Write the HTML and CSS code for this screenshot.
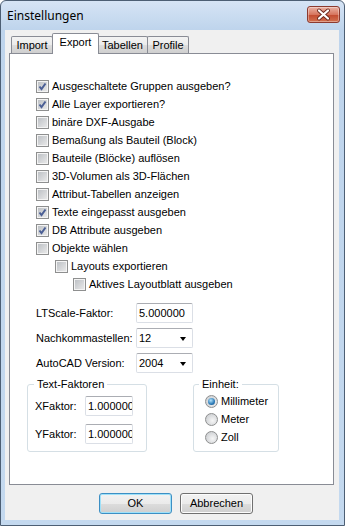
FILE: index.html
```html
<!DOCTYPE html>
<html>
  <head>
    <meta charset="UTF-8">
    <title>Einstellungen</title>
    <link rel="stylesheet" href="styles.css">
  </head>
  <body>
    <div class="window">
      <div class="titlebar">
        <span class="title">Einstellungen</span>
        <span class="close">
          <svg width="33" height="17" viewBox="0 0 33 17">
            <path d="M12 4.5 L21 12.5 M21 4.5 L12 12.5" stroke="#6b2a20" stroke-width="4" stroke-linecap="round"/>
            <path d="M12 4.5 L21 12.5 M21 4.5 L12 12.5" stroke="#fff" stroke-width="2.2" stroke-linecap="round"/>
          </svg>
        </span>
      </div>
      <div class="client">
        <div class="tabs">
          <span class="tab t-import">Import</span>
          <span class="tab t-export active">Export</span>
          <span class="tab t-tabellen">Tabellen</span>
          <span class="tab t-profile">Profile</span>
        </div>
        <div class="panel">
          <div class="checks">
            <div class="check"><span class="cb on"><svg width="13" height="13" viewBox="0 0 13 13"><path d="M3.5 6.5 L5.5 9 L9.5 3.5" fill="none" stroke="#4b5f95" stroke-width="2"/></svg></span>Ausgeschaltete Gruppen ausgeben?</div>
            <div class="check"><span class="cb on"><svg width="13" height="13" viewBox="0 0 13 13"><path d="M3.5 6.5 L5.5 9 L9.5 3.5" fill="none" stroke="#4b5f95" stroke-width="2"/></svg></span>Alle Layer exportieren?</div>
            <div class="check"><span class="cb"></span>binäre DXF-Ausgabe</div>
            <div class="check"><span class="cb"></span>Bemaßung als Bauteil (Block)</div>
            <div class="check"><span class="cb"></span>Bauteile (Blöcke) auflösen</div>
            <div class="check"><span class="cb"></span>3D-Volumen als 3D-Flächen</div>
            <div class="check"><span class="cb"></span>Attribut-Tabellen anzeigen</div>
            <div class="check"><span class="cb on"><svg width="13" height="13" viewBox="0 0 13 13"><path d="M3.5 6.5 L5.5 9 L9.5 3.5" fill="none" stroke="#4b5f95" stroke-width="2"/></svg></span>Texte eingepasst ausgeben</div>
            <div class="check"><span class="cb on"><svg width="13" height="13" viewBox="0 0 13 13"><path d="M3.5 6.5 L5.5 9 L9.5 3.5" fill="none" stroke="#4b5f95" stroke-width="2"/></svg></span>DB Attribute ausgeben</div>
            <div class="check"><span class="cb"></span>Objekte wählen</div>
            <div class="check lvl1"><span class="cb"></span>Layouts exportieren</div>
            <div class="check lvl2"><span class="cb"></span>Aktives Layoutblatt ausgeben</div>
          </div>

          <div class="fields">
            <div class="field"><span class="lbl">LTScale-Faktor:</span><span class="edit">5.000000</span></div>
            <div class="field"><span class="lbl">Nachkommastellen:</span><span class="edit combo">12<i class="arrow"></i></span></div>
            <div class="field"><span class="lbl">AutoCAD Version:</span><span class="edit combo">2004<i class="arrow"></i></span></div>
          </div>

          <div class="groups">
            <fieldset class="group g-text">
              <legend>Text-Faktoren</legend>
              <div class="frow"><span class="flbl">XFaktor:</span><span class="edit small">1.000000</span></div>
              <div class="frow"><span class="flbl">YFaktor:</span><span class="edit small">1.000000</span></div>
            </fieldset>
            <fieldset class="group g-unit">
              <legend>Einheit:</legend>
              <div class="radio"><span class="rb on"></span>Millimeter</div>
              <div class="radio"><span class="rb"></span>Meter</div>
              <div class="radio"><span class="rb"></span>Zoll</div>
            </fieldset>
          </div>
        </div>
        <div class="buttons">
          <span class="btn default">OK</span>
          <span class="btn">Abbrechen</span>
        </div>
      </div>
    </div>
  </body>
</html>
```

FILE: styles.css
```css
* {
  box-sizing: border-box;
}
body {
  margin: 0;
  background: #fff;
  color: #000;
  font-family: 'Liberation Sans', Arial, sans-serif;
  font-size: 11px;
}

/* window frame */
.window {
  width: 345px;
  height: 526px;
  border: 1px solid #4d5f74;
  border-radius: 6px 6px 0 0;
  background: linear-gradient(#d6e4f5, #bed4ec 29px, #c4d9ef);
  display: flex;
  flex-direction: column;
  overflow: hidden;
}
.titlebar {
  height: 29px;
  display: flex;
  align-items: center;
  padding-left: 6px;
}
.title {
  flex: 1;
  font-family: 'Noto Sans', sans-serif;
  font-size: 12px;
}
.close {
  align-self: flex-start;
  width: 33px;
  height: 17px;
  margin-top: 5px;
  margin-right: 4px;
  border: 1px solid #8c3a2f;
  border-radius: 3px;
  background: linear-gradient(#eab2a4, #d7765f 50%, #c24a30 51%, #d2704f);
  box-shadow: inset 0 0 0 1px rgba(255,255,255,0.35);
}
.close svg {
  display: block;
  margin: -1px;
}
.client {
  flex: 1;
  margin: 0 5px 5px 4px;
  background: #f0f0f0;
}

/* tabs */
.tabs {
  height: 23px;
  padding-left: 6px;
  display: flex;
  align-items: flex-end;
}
.tab {
  height: 17px;
  border: 1px solid #898c95;
  border-bottom: none;
  border-radius: 2px 2px 0 0;
  background: linear-gradient(#f3f3f3, #ebebeb 50%, #dddddd 51%, #cfcfcf);
  text-align: center;
  line-height: 16px;
}
.tab + .tab {
  margin-left: -1px;
}
.t-import { width: 42px; }
.t-export { width: 46px; }
.t-tabellen { width: 51px; }
.t-profile { width: 42px; }
.tab.active {
  height: 21px;
  margin-bottom: -1px;
  margin-left: -1px;
  margin-right: -1px;
  width: 47px;
  background: #fff;
  line-height: 17px;
  position: relative;
  z-index: 1;
}

.panel {
  margin-left: 4px;
  width: 325px;
  height: 432px;
  border: 1px solid #898c95;
  background: #fff;
  padding: 23px 0 0 26px;
}

/* checkboxes */
.check {
  height: 18px;
  display: flex;
  align-items: center;
}
.check.lvl1 { padding-left: 19px; }
.check.lvl2 { padding-left: 37px; }
.cb {
  width: 13px;
  height: 13px;
  margin-right: 3px;
  border: 1px solid #8e8f8f;
  background: linear-gradient(135deg, #b9bdc2, #ececec);
  box-shadow: inset 0 0 0 1px #f4f4f4;
  flex: none;
}
.cb svg {
  display: block;
  margin: -1px;
}

/* text fields */
.fields {
  margin-top: 10px;
}
.field {
  height: 20px;
  margin-bottom: 5px;
  display: flex;
  align-items: center;
}
.lbl {
  width: 100px;
}
.edit {
  width: 57px;
  height: 20px;
  border: 1px solid #dbdfe6;
  border-top-color: #abadb3;
  border-radius: 2px;
  background: #fff;
  padding-left: 2px;
  line-height: 18px;
  position: relative;
  overflow: hidden;
  white-space: nowrap;
}
.arrow {
  position: absolute;
  right: 6px;
  top: 8px;
  border-left: 3.5px solid transparent;
  border-right: 3.5px solid transparent;
  border-top: 4px solid #000;
}

/* group boxes */
.groups {
  display: flex;
  margin-left: -9px;
  margin-top: 2px;
}
.group {
  margin: 0;
  padding: 0;
  border: 1px solid #d5dfe5;
  border-radius: 3px;
}
.group legend {
  padding: 0 3px;
  line-height: 13px;
}
.g-text {
  width: 120px;
  padding: 5px 0 6px 7px;
}
.g-text legend {
  margin-left: -1px;
}
.g-unit {
  width: 86px;
  margin-left: 46px;
  padding: 1px 0 5px 11px;
}
.g-unit legend {
  margin-left: -6px;
}
.frow {
  display: flex;
  align-items: center;
  height: 20px;
}
.frow + .frow {
  margin-top: 8px;
}
.flbl {
  width: 50px;
}
.edit.small {
  width: 48px;
}
.radio {
  height: 18px;
  display: flex;
  align-items: center;
}
.rb {
  width: 13px;
  height: 13px;
  margin-right: 3px;
  border: 1px solid #8e8f8f;
  border-radius: 50%;
  background: radial-gradient(circle at 60% 60%, #f6f6f6, #c3c6ca);
  display: flex;
  align-items: center;
  justify-content: center;
  flex: none;
}
.rb.on::after {
  content: "";
  width: 7px;
  height: 7px;
  border-radius: 50%;
  background: radial-gradient(circle at 40% 35%, #b4e3fb, #2a79b6 60%, #174c7c);
}

/* buttons */
.buttons {
  display: flex;
  gap: 8px;
  margin-top: 8px;
  padding-left: 94px;
}
.btn {
  width: 73px;
  height: 21px;
  border: 1px solid #707070;
  border-radius: 3px;
  background: linear-gradient(#f2f2f2, #ebebeb 50%, #dddddd 51%, #cfcfcf);
  box-shadow: inset 0 0 0 1px #fcfcfc;
  text-align: center;
  line-height: 19px;
}
.btn.default {
  border-color: #3c8fc4;
  box-shadow: inset 0 0 0 1px #9fe1f9;
}
```
